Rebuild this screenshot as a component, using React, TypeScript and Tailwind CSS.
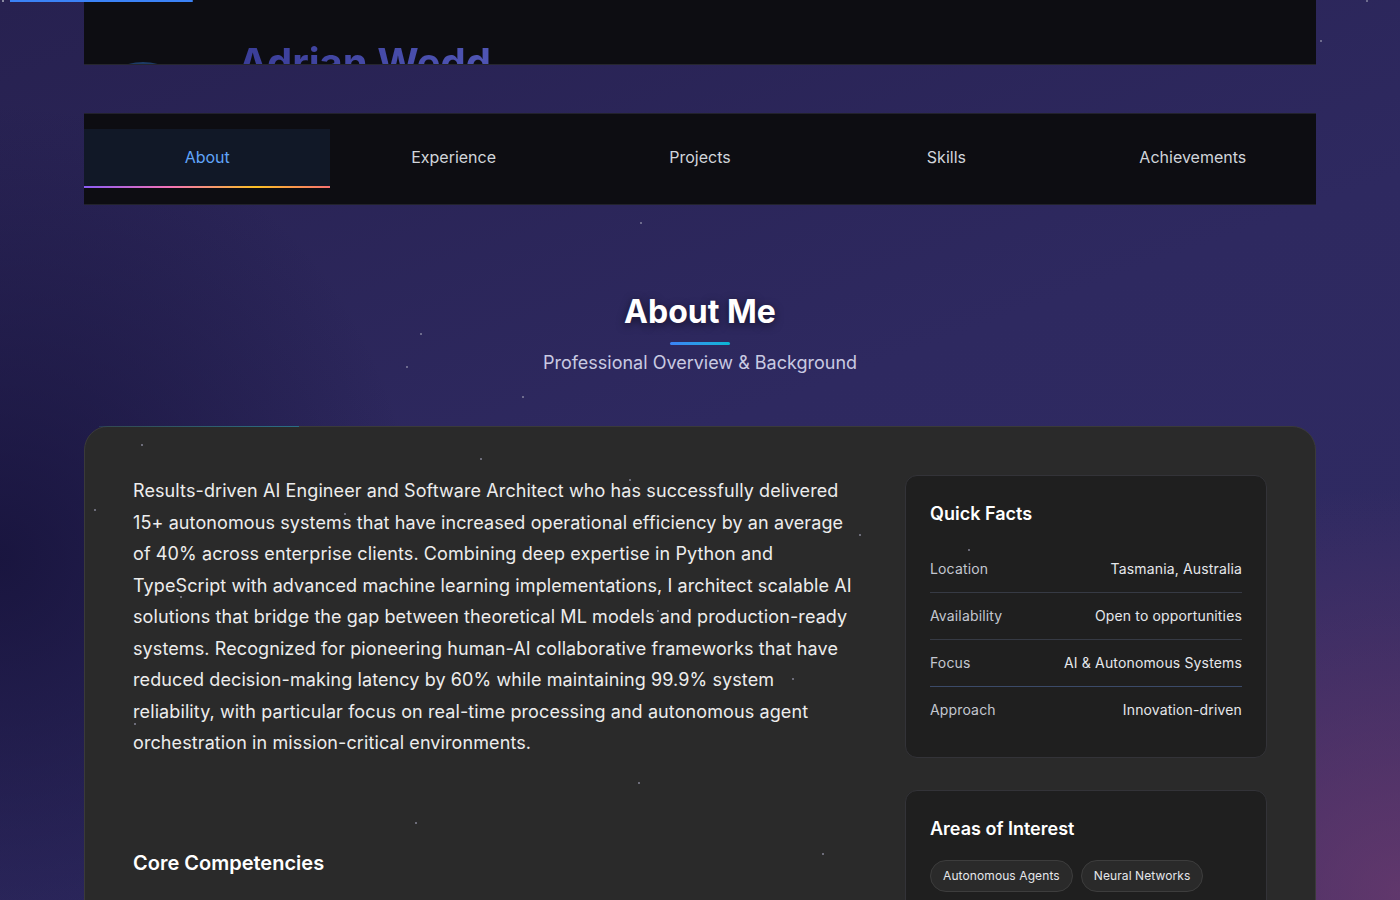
import React from "react";

const tabs = ["About", "Experience", "Projects", "Skills", "Achievements"];

const facts = [
  { label: "Location", value: "Tasmania, Australia", line: "border-[#363a44]" },
  { label: "Availability", value: "Open to opportunities", line: "border-[#363a44]" },
  { label: "Focus", value: "AI & Autonomous Systems", line: "border-[#3b4a68]" },
  { label: "Approach", value: "Innovation-driven", line: "" },
];

const interests = ["Autonomous Agents", "Neural Networks"];

// little star specks drawn across the whole page
const stars = [
  [640, 222], [420, 333], [406, 366], [522, 396], [141, 444], [480, 458], [629, 479],
  [94, 509], [859, 534], [344, 513], [968, 549], [180, 596], [657, 610], [792, 678],
  [134, 723], [638, 782], [415, 822], [822, 853], [1366, 0], [1320, 40],
];

export default function App() {
  return (
    <div className="relative min-h-screen overflow-hidden bg-[#2c275c] font-['Inter','Noto_Sans',sans-serif] text-white">
      {/* background glows */}
      <div className="pointer-events-none absolute inset-0 bg-[linear-gradient(160deg,#272150_0%,#2e2960_45%,#2f2a62_70%,#33295e_100%)]" />
      <div className="pointer-events-none absolute inset-0 bg-[radial-gradient(ellipse_30%_45%_at_0%_55%,rgba(22,18,58,0.85),transparent)]" />
      <div className="pointer-events-none absolute inset-0 bg-[radial-gradient(ellipse_32%_40%_at_100%_88%,rgba(112,60,112,0.75),transparent)]" />

      {/* progress bar */}
      <div className="absolute left-[10px] top-0 z-20 h-[2px] w-[183px] rounded-r bg-[#3b82f6]" />
      <div className="absolute left-[2px] top-0 z-20 h-[2px] w-[2px] bg-[#8a8aa0]" />

      <div className="relative z-0 mx-auto max-w-7xl px-6">
        {/* header, mostly scrolled away */}
        <header className="relative h-[65px] overflow-hidden border-b border-[#26262e] bg-[#0d0d12]">
          <div className="absolute left-[4px] top-[62px] h-[110px] w-[110px] rounded-full bg-[#1d3b66]" />
          <h1 className="absolute left-[154px] top-[39px] whitespace-nowrap bg-gradient-to-r from-[#3a3d98] to-[#4f55b4] bg-clip-text text-[40px] leading-[48px] font-bold text-transparent">
            Adrian Wedd
          </h1>
        </header>

        {/* tabs */}
        <nav className="mt-12 grid grid-cols-5 border-y border-[#22222c] bg-[#0d0d12] pt-[15px] pb-4">
          {tabs.map((t, i) => (
            <div
              key={t}
              className={
                "relative h-[59px] pt-4 text-center text-base leading-6 " +
                (i === 0 ? "bg-[#111827] text-[#60a5fa]" : "text-[#d1d5db]")
              }
            >
              {t}
              {i === 0 && (
                <div className="absolute bottom-0 left-0 h-[2px] w-full bg-[linear-gradient(90deg,#8b5cf6,#f472b6_35%,#fbbf24_70%,#f87171)]" />
              )}
            </div>
          ))}
        </nav>

        {/* section heading */}
        <div className="pt-[87px] text-center">
          <h2 className="text-[32px] leading-10 font-bold text-white [text-shadow:0_2px_8px_rgba(0,0,0,0.55)]">About Me</h2>
          <div className="mx-auto mt-[10px] h-[3px] w-[60px] rounded-full bg-gradient-to-r from-[#3b82f6] to-[#06b6d4]" />
          <p className="mt-1 text-lg leading-7 text-[#c9cae2]">Professional Overview &amp; Background</p>
        </div>

        {/* main card */}
        <div className="relative mt-[49px] rounded-3xl border border-[#3a3a3a] bg-[#2a2a2a] p-12 pb-24">
          <div className="absolute -top-px left-[14px] h-px w-[200px] bg-gradient-to-r from-[#2a5c70]/40 to-[#2b6f86]" />
          <div className="grid grid-cols-[2fr_1fr] gap-12">
            <div>
              <p className="text-lg leading-[1.75] tracking-[0.1px] text-[#ededed]">
                Results-driven AI Engineer and Software Architect who has successfully delivered 15+ autonomous systems that have
                increased operational efficiency by an average of 40% across enterprise clients. Combining deep expertise in Python
                and TypeScript with advanced machine learning implementations, I architect scalable AI solutions that bridge the gap
                between theoretical ML models and production-ready systems. Recognized for pioneering human-AI collaborative
                frameworks that have reduced decision-making latency by 60% while maintaining 99.9% system reliability, with
                particular focus on real-time processing and autonomous agent orchestration in mission-critical environments.
              </p>
              <h3 className="mt-[90px] text-xl leading-7 font-semibold text-white">Core Competencies</h3>
            </div>

            <div className="flex flex-col gap-8">
              <div className="rounded-xl border border-[#333338] bg-[#1f1f1f] p-6">
                <h4 className="mb-[18px] text-lg leading-7 font-semibold text-white">Quick Facts</h4>
                {facts.map((f) => (
                  <div
                    key={f.label}
                    className={
                      "flex items-center justify-between py-[13px] text-sm leading-5 tracking-[0.15px] " +
                      (f.line ? "border-b " + f.line : "")
                    }
                  >
                    <span className="text-[#c3c7d0]">{f.label}</span>
                    <span className="text-[#e5e7eb]">{f.value}</span>
                  </div>
                ))}
              </div>

              <div className="rounded-xl border border-[#333338] bg-[#1f1f1f] p-6">
                <h4 className="mb-[17px] text-lg leading-7 font-semibold text-white">Areas of Interest</h4>
                <div className="flex flex-wrap gap-2">
                  {interests.map((a) => (
                    <span
                      key={a}
                      className="rounded-full border border-[#3d3d3d] bg-[#2a2a2a] px-3 py-[7px] text-xs leading-4 tracking-[0.1px] text-[#e5e7eb]"
                    >
                      {a}
                    </span>
                  ))}
                </div>
              </div>
            </div>
          </div>
        </div>
      </div>

      {/* stars overlay */}
      <div className="pointer-events-none absolute inset-0 z-10">
        {stars.map(([x, y], i) => (
          <div
            key={i}
            className="absolute h-[2px] w-[2px] rounded-full bg-[#9a9ab0]/80"
            style={{ left: x, top: y }}
          />
        ))}
      </div>
    </div>
  );
}
